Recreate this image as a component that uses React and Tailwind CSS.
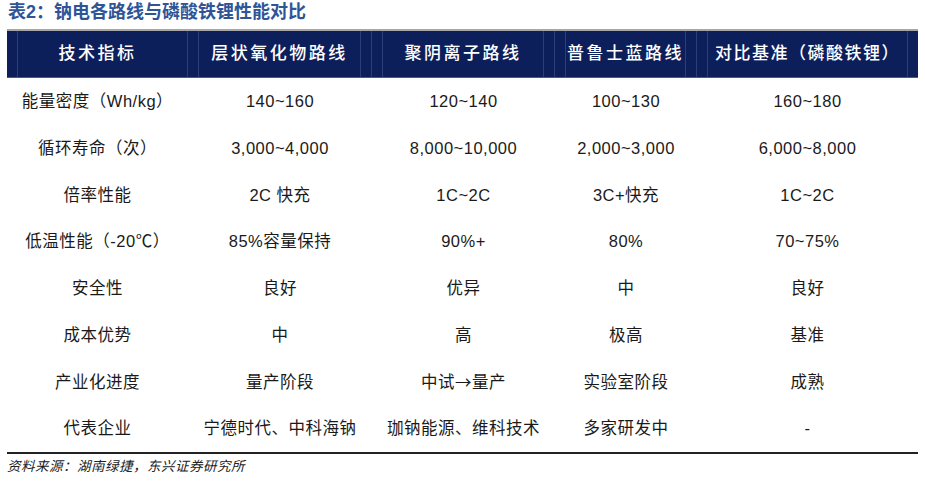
const ROWS = [
  ['能量密度（Wh/kg）', '140~160', '120~140', '100~130', '160~180'],
  ['循环寿命（次）', '3,000~4,000', '8,000~10,000', '2,000~3,000', '6,000~8,000'],
  ['倍率性能', '2C 快充', '1C~2C', '3C+快充', '1C~2C'],
  ['低温性能（-20℃）', '85%容量保持', '90%+', '80%', '70~75%'],
  ['安全性', '良好', '优异', '中', '良好'],
  ['成本优势', '中', '高', '极高', '基准'],
  ['产业化进度', '量产阶段', <>中试<span style={{ fontFamily: '"Noto Sans CJK SC", sans-serif' }}>→</span>量产</>, '实验室阶段', '成熟'],
  ['代表企业', '宁德时代、中科海钠', '珈钠能源、维科技术', '多家研发中', '-'],
]

const COLS = ['w-[181px]', 'w-[184px]', 'w-[183px]', 'w-[142px]', 'w-[221px]']

const FONT = { fontFamily: '"Liberation Sans", "Noto Sans CJK SC", sans-serif' }

export default function App() {
  return (
    <div className="w-[925px] h-[481px] bg-white overflow-hidden" style={FONT}>
      {/* 标题 */}
      <div className="h-[24px] pl-[8px] text-[18px] leading-[24px] font-bold text-[#2f5597]">
        表2：钠电各路线与磷酸铁锂性能对比
      </div>

      <div className="mx-[7px] mt-[5px]">
        {/* 表头 */}
        <div className="border-t-2 border-[#a6a6a6]">
          <div className="flex h-[47px] bg-[#0d1f5b] border-b border-[#5a5a5a] text-white text-[17px] tracking-[2.5px] font-medium">
            <div className={`${COLS[0]} border-r border-[#2c3d7c] pl-[10px]`}>
              <div className="h-full border-l border-[#2c3d7c] flex items-center justify-center pr-[10px]">技术指标</div>
            </div>
            <div className={`${COLS[1]} border-r border-[#2c3d7c] px-[10px]`}>
              <div className="h-full border-l border-r border-[#2c3d7c] flex items-center justify-center">层状氧化物路线</div>
            </div>
            <div className={`${COLS[2]} border-r border-[#2c3d7c] px-[10px]`}>
              <div className="h-full border-l border-r border-[#2c3d7c] flex items-center justify-center">聚阴离子路线</div>
            </div>
            <div className={`${COLS[3]} border-r border-[#2c3d7c] px-[10px]`}>
              <div className="h-full border-l border-r border-[#2c3d7c] flex items-center justify-center">普鲁士蓝路线</div>
            </div>
            <div className={`${COLS[4]} px-[10px]`}>
              <div className="h-full border-l border-r border-[#2c3d7c] flex items-center justify-center tracking-[1.5px]">对比基准（磷酸铁锂）</div>
            </div>
          </div>
        </div>

        {/* 表体 */}
        <div className="border-b-2 border-[#222]">
          {ROWS.map(row => (
            <div key={row[0]} className="flex h-[46.75px] text-[16.5px] tracking-[0.5px] text-[#1a1a1a]">
              {row.map((cell, i) => (
                <div key={i} className={`${COLS[i]} flex items-center justify-center whitespace-nowrap`}>
                  {cell}
                </div>
              ))}
            </div>
          ))}
        </div>

        <div className="mt-[5px] text-[13.5px] leading-[16px] italic text-[#222] tracking-[0.5px]">
          资料来源：湖南绿捷，东兴证券研究所
        </div>
      </div>
    </div>
  )
}
